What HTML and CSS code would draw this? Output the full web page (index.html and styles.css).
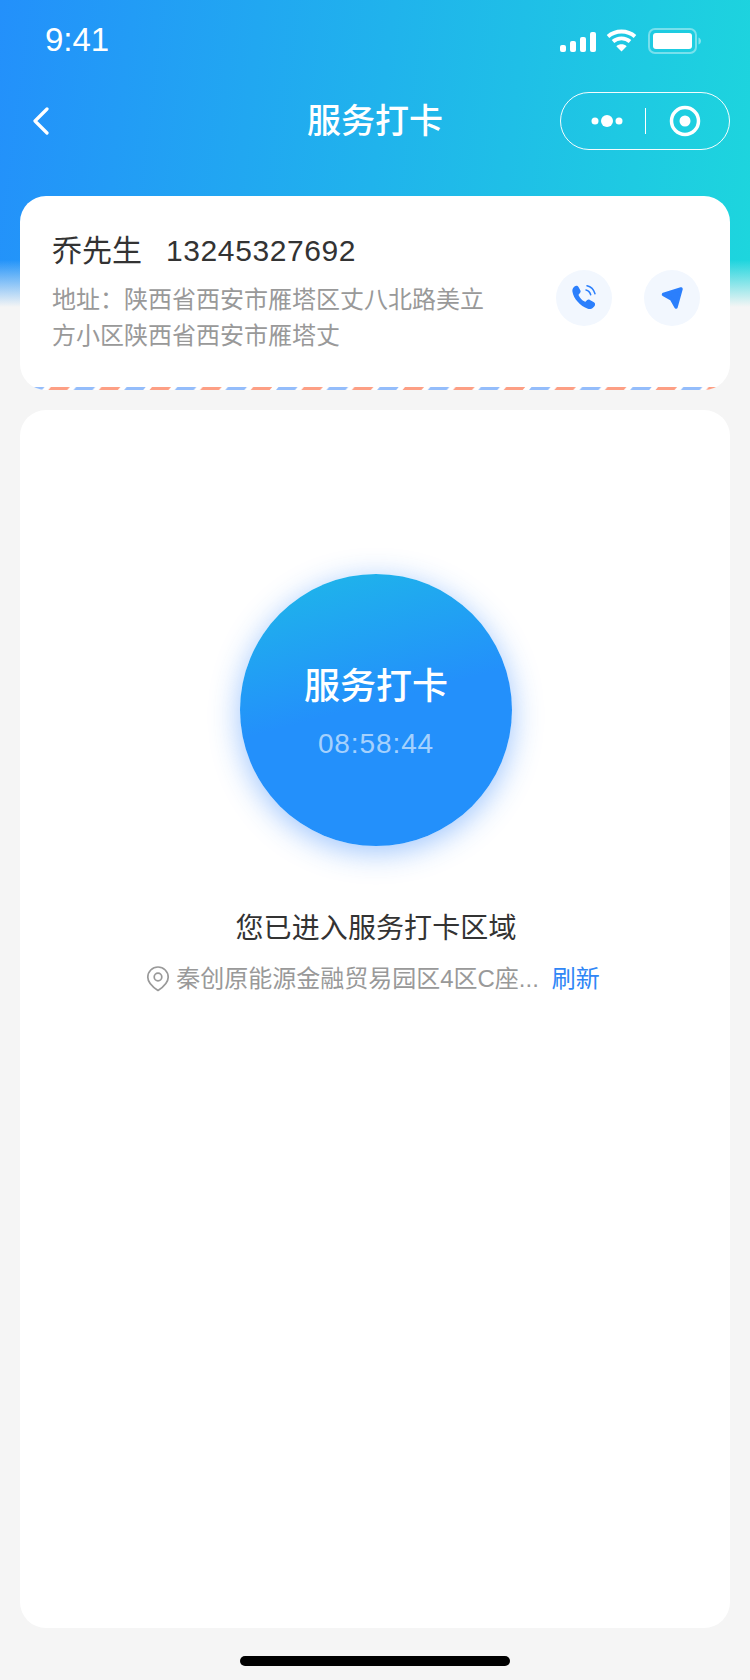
FILE: index.html
```html
<!DOCTYPE html>
<html lang="zh-CN">
<head>
<meta charset="utf-8">
<title>服务打卡</title>
<link rel="stylesheet" href="styles.css">
</head>
<body>
<div class="page">
  <div class="status">
    <span class="time">9:41</span>
    <div class="status-icons">
      <svg class="signal" width="36" height="20" viewBox="0 0 36 20" fill="#fff"><rect x="0" y="13" width="6" height="7" rx="2"/><rect x="10" y="9" width="6" height="11" rx="2"/><rect x="20" y="5" width="6" height="15" rx="2"/><rect x="30" y="0" width="6" height="20" rx="2"/></svg>
      <svg class="wifi" width="31" height="23" viewBox="0 0 31 23" fill="none" stroke="#fff" stroke-width="3.8"><path d="M2 7.500C9.500 .8 21.500 .8 29 7.500"/><path d="M7 12.500C11.800 8.300 19.200 8.300 24 12.500"/><path d="M15.500 22.500L10.300 17.200C13.300 14.600 17.700 14.600 20.700 17.200Z" fill="#fff" stroke="none"/></svg>
      <svg class="battery" width="54" height="26" viewBox="0 0 54 26" fill="none"><rect x="1" y="1" width="47" height="24" rx="6" stroke="#fff" stroke-opacity=".4" stroke-width="2"/><rect x="5" y="5" width="39" height="16" rx="3" fill="#fff"/><path d="M50.500 9.500c1.500.5 2.500 2 2.500 3.500s-1 3-2.500 3.500z" fill="#fff" fill-opacity=".45"/></svg>
    </div>
  </div>
  <div class="nav">
    <svg class="back" width="18" height="28" viewBox="0 0 18 28" fill="none" stroke="#fff" stroke-width="3.2" stroke-linecap="round" stroke-linejoin="round"><path d="M15 2L3 14l12 12"/></svg>
    <h1 class="title">服务打卡</h1>
    <div class="capsule">
      <svg width="46" height="16" viewBox="0 0 46 16" fill="#fff"><circle cx="5" cy="8" r="3.500"/><circle cx="17" cy="8" r="6"/><circle cx="29" cy="8" r="3.500"/></svg>
      <span class="capsule-line"></span>
      <svg width="32" height="32" viewBox="0 0 32 32" fill="none"><circle cx="16" cy="16" r="13.500" stroke="#fff" stroke-width="3.500"/><circle cx="16" cy="16" r="5.500" fill="#fff"/></svg>
    </div>
  </div>

  <section class="card customer">
    <div class="info">
      <div class="who"><span class="name">乔先生</span><span class="phone">13245327692</span></div>
      <p class="address">地址：陕西省西安市雁塔区丈八北路美立方小区陕西省西安市雁塔丈</p>
    </div>
    <div class="actions">
      <button class="action" type="button" aria-label="电话">
        <svg width="28" height="28" viewBox="0 0 28 28" fill="#2b7ffc"><path d="M4.500 2.400C6 1.200 7.700 1.500 8.500 3l1.800 3.200c.6 1.100.4 2.200-.5 3l-.9 1.100c-.4.300-.4.700-.2 1.100 1.300 2.600 3.300 4.700 5.900 6.200.4.200.8.200 1.100-.1l1.200-1.200c.9-.9 2-1 3-.4l4 2.400c1.400.8 1.600 2.700.5 3.900l-1.200 1.200c-1.300 1.300-3.400 2-5.300 1.400-3.900-1.200-7.500-3.700-10.200-7C4.900 15 3 11 2.400 7.400c-.3-2 .6-3.900 2.100-5z"/><g fill="none" stroke="#2b7ffc" stroke-width="1.500" stroke-linecap="round"><path d="M17 1.800c3.800.8 6.800 3.800 8 8"/><path d="M16 6c2.300.5 4 2.300 4.700 4.800"/></g></svg>
      </button>
      <button class="action" type="button" aria-label="导航">
        <svg width="28" height="28" viewBox="0 0 28 28" fill="#2b7ffc" stroke="#2b7ffc" stroke-width="3.500" stroke-linejoin="round"><path d="M5.500 10.500L23 5L18 23L13.500 15Z"/></svg>
      </button>
    </div>
    <svg class="airmail" width="710" height="3" aria-hidden="true"><defs><pattern id="stripes" width="50.600" height="3" patternUnits="userSpaceOnUse"><polygon points="3,3 5.500,0 24.500,0 22,3" fill="#94bdfb"/><polygon points="28.300,3 30.800,0 49.800,0 47.300,3" fill="#fd9f84"/></pattern></defs><rect width="710" height="3" fill="url(#stripes)"/></svg>
  </section>

  <section class="card punch">
    <button class="punch-btn" type="button">
      <span class="punch-label">服务打卡</span>
      <span class="punch-time">08:58:44</span>
    </button>
    <p class="state">您已进入服务打卡区域</p>
    <div class="place">
      <svg width="24" height="26" viewBox="0 0 24 26" fill="none" stroke="#999" stroke-width="1.700"><path d="M12 24.500C6 20.500 1.800 16.200 1.800 11.200A10.200 10.200 0 0 1 22.200 11.200C22.200 16.200 18 20.500 12 24.500Z" stroke-linejoin="round"/><circle cx="12" cy="11" r="3.800"/></svg>
      <span class="place-name">秦创原能源金融贸易园区4区C座...</span>
      <span class="refresh">刷新</span>
    </div>
  </section>

  <div class="home-bar"></div>
</div>
</body>
</html>
```
FILE: styles.css
```css
* { box-sizing: border-box; }
html, body { margin: 0; padding: 0; }
body {
  font-family: "Liberation Sans", "Noto Sans CJK SC", sans-serif;
  color: #333;
}
.page {
  width: 750px;
  height: 1680px;
  overflow: hidden;
  display: flex;
  flex-direction: column;
  background:
    linear-gradient(to bottom, rgba(245,245,245,0) 260px, #f5f5f5 307px),
    linear-gradient(97deg, #2390fb 0%, #1dd6dd 100%) 0 0 / 100% 307px no-repeat,
    #f5f5f5;
}
.status {
  height: 92px;
  padding: 22px 48px 0 45px;
  display: flex;
  justify-content: space-between;
  align-items: flex-start;
  color: #fff;
}
.time { font-size: 33px; line-height: 36px; }
.status-icons { display: flex; align-items: flex-end; gap: 10px; margin-top: 6px; }
.signal { margin-bottom: 2px; }
.wifi { margin: 0 1px 2px 0; }
.nav {
  height: 58px;
  padding: 0 20px 0 32px;
  display: flex;
  align-items: center;
  justify-content: space-between;
  position: relative;
}
.title {
  margin: 0;
  position: absolute;
  left: 0;
  right: 0;
  top: 5px;
  text-align: center;
  color: #fff;
  font-size: 34px;
  font-weight: 500;
  line-height: 48px;
}
.capsule {
  width: 170px;
  height: 58px;
  border: 1.500px solid rgba(255,255,255,.95);
  border-radius: 29px;
  display: flex;
  align-items: center;
  padding-left: 29px;
}
.capsule-line { width: 1px; height: 26px; background: #fff; margin: 0 23px 0 9px; }
.card {
  margin: 0 20px;
  background: #fff;
  border-radius: 26px;
}
.customer {
  height: 194px;
  margin-top: 46px;
  padding: 34px 30px 0 32px;
  display: flex;
  justify-content: space-between;
  align-items: flex-start;
  position: relative;
  overflow: hidden;
}
.info { width: 440px; }
.who { display: flex; gap: 24px; font-size: 30px; line-height: 42px; color: #333; }
.phone { letter-spacing: .6px; }
.address {
  margin: 10px 0 0;
  font-size: 24px;
  line-height: 36px;
  color: #999;
}
.actions { display: flex; gap: 32px; margin-top: 40px; }
.action {
  width: 56px;
  height: 56px;
  padding: 0;
  border: 0;
  border-radius: 50%;
  background: #f2f7fe;
  display: flex;
  align-items: center;
  justify-content: center;
}
.airmail { position: absolute; left: 0; bottom: 0; display: block; }
.punch {
  height: 1218px;
  margin-top: 20px;
  padding-top: 164px;
  display: flex;
  flex-direction: column;
  align-items: center;
}
.punch-btn {
  width: 272px;
  height: 272px;
  margin-left: 2px;
  padding: 5px 0 0;
  border: 0;
  border-radius: 50%;
  background: linear-gradient(165deg, #1eb9e8 0%, #2390fb 48%, #2390fb 100%);
  box-shadow: 0 6px 30px rgba(36,125,250,.45);
  display: flex;
  flex-direction: column;
  align-items: center;
  justify-content: center;
  font-family: inherit;
  color: #fff;
}
.punch-label { font-size: 36px; font-weight: 500; line-height: 50px; }
.punch-time { font-size: 28px; line-height: 40px; margin-top: 12px; letter-spacing: .9px; color: rgba(255,255,255,.6); }
.state { margin: 63px 0 0 2px; font-size: 28px; line-height: 40px; letter-spacing: .1px; color: #333; }
.place {
  margin: 12px 4px 0 0;
  display: flex;
  align-items: center;
  font-size: 24px;
  line-height: 36px;
  color: #999;
}
.place-name { margin-left: 6px; }
.refresh { margin-left: 13px; color: #2f86f6; }
.home-bar {
  width: 270px;
  height: 10px;
  margin: 28px auto 0;
  background: #000;
  border-radius: 5px;
}
```
